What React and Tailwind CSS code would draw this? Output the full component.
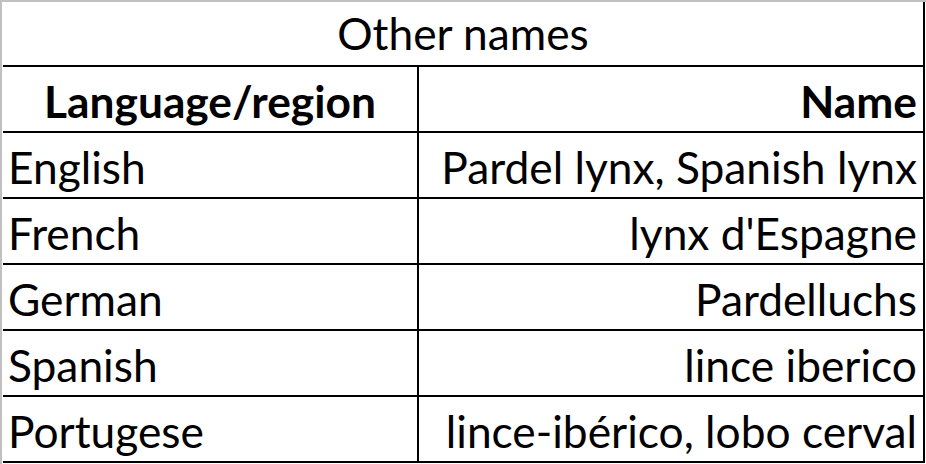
import React from "react";

const rows = [
  ["English", "Pardel lynx, Spanish lynx"],
  ["French", "lynx d'Espagne"],
  ["German", "Pardelluchs"],
  ["Spanish", "lince iberico"],
  ["Portugese", "lince-ibérico, lobo cerval"],
];

export default function App() {
  return (
    <div
      className="w-[926px] h-[464px] bg-white border-t-2 border-l-2 border-[#c0c0c0] pl-px pr-px text-black text-[44.3px] leading-none"
      style={{ fontFamily: "Lato, 'Open Sans', sans-serif" }}
    >
      <div className="border-r-2 border-black">
        <div className="h-[65px] border-b-2 border-black flex items-end justify-center pb-[10px]">
          Other names
        </div>
        <div className="flex h-[66px] border-b-2 border-black font-bold">
          <div className="w-[416px] border-r-2 border-black flex items-end justify-center pb-[8px]">
            Language/region
          </div>
          <div className="flex-1 flex items-end justify-end pr-[6px] pb-[8px]">Name</div>
        </div>
        {rows.map(([lang, name]) => (
          <div key={lang} className="flex h-[66px] border-b-2 border-black">
            <div className="w-[416px] border-r-2 border-black flex items-end pl-[5px] pb-[8px]">
              {lang}
            </div>
            <div className="flex-1 flex items-end justify-end pr-[6px] pb-[8px]">{name}</div>
          </div>
        ))}
      </div>
    </div>
  );
}
